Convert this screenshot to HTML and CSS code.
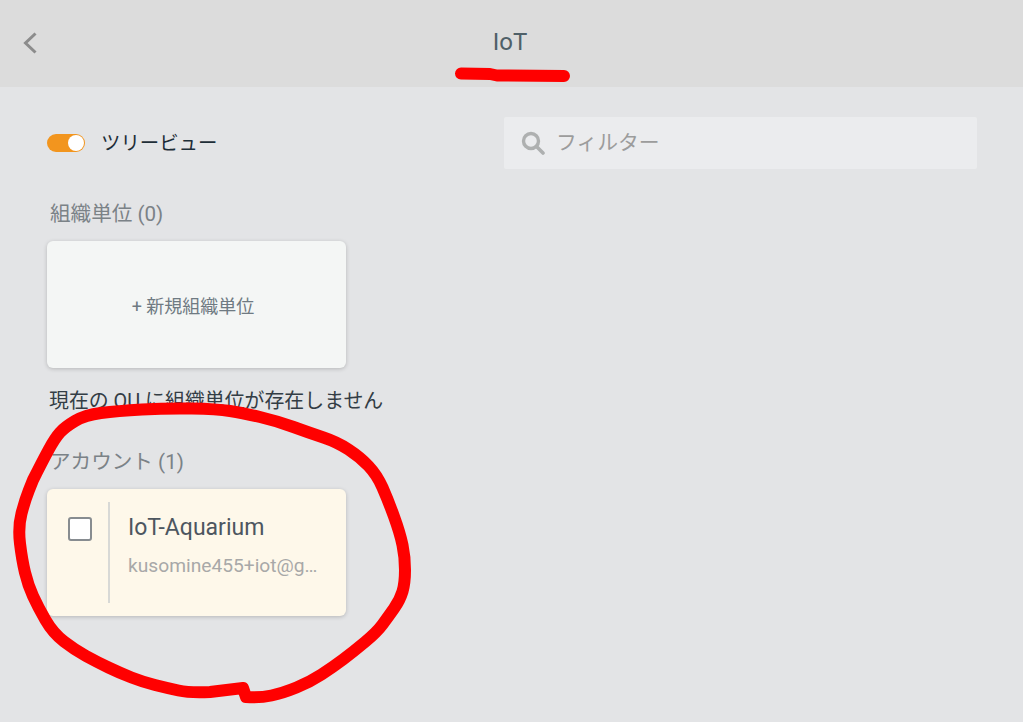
FILE: index.html
```html
<!DOCTYPE html>
<html lang="ja">
<head>
<meta charset="utf-8">
<title>IoT</title>
<link rel="stylesheet" href="styles.css">
</head>
<body>
<div class="page">
  <header class="topbar">
    <button class="back" aria-label="戻る">
      <svg width="16" height="22" viewBox="0 0 16 22"><path d="M13.5 1.5 L3.5 11 L13.5 20.5" fill="none" stroke="#8c8c8c" stroke-width="3"/></svg>
    </button>
    <h1 class="title">IoT</h1>
  </header>
  <main class="content">
    <div class="toolbar">
      <div class="tree-toggle">
        <span class="switch"><span class="knob"></span></span>
        <span class="toggle-label">ツリービュー</span>
      </div>
      <div class="filter">
        <svg class="search-icon" width="24" height="24" viewBox="0 0 24 24"><circle cx="10" cy="10" r="7.5" fill="none" stroke="#aeb0b0" stroke-width="3.4"/><path d="M15.5 15.5 L22 22" stroke="#aeb0b0" stroke-width="3.6" stroke-linecap="round"/></svg>
        <span class="placeholder">フィルター</span>
      </div>
    </div>
    <h2 class="section-label">組織単位 (0)</h2>
    <div class="card card-new">+ 新規組織単位</div>
    <p class="empty-note">現在の OU に組織単位が存在しません</p>
    <h2 class="section-label section-accounts">アカウント (1)</h2>
    <div class="card card-account">
      <div class="check-col"><span class="checkbox"></span></div>
      <div class="account-info">
        <div class="account-name">IoT-Aquarium</div>
        <div class="account-mail">kusomine455+iot@g…</div>
      </div>
    </div>
  </main>
  <svg class="scribble" width="1023" height="722" viewBox="0 0 1023 722">
    <path d="M461 73.5 L490 74 L497 75.5 L564 76" />
    <path d="M33 480 Q42 462 48.5 450 Q55 438 60 432.5 Q65 427 75 421 Q85 415 101 413 Q117 411 142 409.5 Q167 408 192 408.5 Q217 409 230 411 Q243 413 260 417 Q277 421 293.5 427 Q310 433 323.5 437.5 Q337 442 348.5 449.5 Q360 457 368.5 466 Q377 475 382.5 487.5 Q388 500 394 516.5 Q400 533 402.5 545 Q405 557 405 570 Q405 583 402.5 591.5 Q400 600 394 608.5 Q388 617 382.5 624.5 Q377 632 365 642 Q353 652 343 659.5 Q333 667 321.5 674.5 Q310 682 296.5 687.5 Q283 693 271.5 695.5 Q260 698 246 697 L243 688 L210 692 Q190 693 178.5 690.5 Q167 688 155 685 Q143 682 131.5 677.5 Q120 673 108.5 667.5 Q97 662 86 656 Q75 650 64 641.5 Q53 633 45.5 620 Q38 607 33 596 Q28 585 25 572.5 Q22 560 20 543.5 Q18 527 21.5 513.5 Q25 500 29 490 L33 480" />
  </svg>
</div>
</body>
</html>
```
FILE: styles.css
```css
html, body {
  margin: 0;
  padding: 0;
  height: 100%;
  overflow: hidden;
}
body {
  background: #e3e4e6;
  font-family: Roboto, "Noto Sans CJK JP", sans-serif;
}
.page {
  position: relative;
  height: 722px;
}
.topbar {
  height: 87px;
  background: #dcdcdc;
  display: flex;
  align-items: center;
  justify-content: center;
  position: relative;
  box-sizing: border-box;
}
.back {
  position: absolute;
  left: 22px;
  top: 32px;
  padding: 0;
  border: 0;
  background: none;
  line-height: 0;
}
.title {
  margin: 0 0 4px -3px;
  font-size: 24px;
  font-weight: 400;
  color: #4f6068;
}
.content {
  padding: 30px 46px 0 47px;
}
.toolbar {
  display: flex;
  justify-content: space-between;
  align-items: center;
}
.tree-toggle {
  display: flex;
  align-items: center;
  gap: 16px;
}
.switch {
  width: 38px;
  height: 18px;
  border-radius: 9px;
  background: #f2951e;
  position: relative;
}
.knob {
  position: absolute;
  right: 1px;
  top: 1px;
  width: 16px;
  height: 16px;
  border-radius: 50%;
  background: #fff;
}
.toggle-label {
  font-size: 19.4px;
  line-height: 26px;
  margin-top: 2px;
  color: #1e2e38;
}
.filter {
  width: 473px;
  height: 52px;
  box-sizing: border-box;
  padding-left: 17px;
  background: #ebecee;
  border-radius: 2px;
  display: flex;
  align-items: center;
  gap: 11px;
}
.placeholder {
  font-size: 20.8px;
  line-height: 28px;
  color: #9c9c9c;
}
.section-label {
  margin: 31px 0 13px 3px;
  font-size: 20.6px;
  line-height: 28px;
  font-weight: 400;
  color: #7b8287;
}
.card {
  width: 299px;
  height: 127px;
  box-sizing: border-box;
  border-radius: 6px;
  box-shadow: 0 1px 4px rgba(0, 0, 0, 0.2);
}
.card-new {
  background: #f4f6f5;
  display: flex;
  align-items: center;
  justify-content: center;
  padding-right: 7px;
  font-size: 18px;
  color: #6f7a82;
}
.empty-note {
  margin: 20px 0 0 2px;
  font-size: 19.9px;
  line-height: 28px;
  color: #333d45;
}
.section-accounts {
  margin-top: 32px;
  margin-bottom: 13px;
}
.card-account {
  background: #fef8ea;
  display: flex;
  padding: 13px 0;
}
.check-col {
  width: 40px;
  height: 86px;
  flex: none;
  border-right: 2px solid #d8d9d6;
  padding: 15px 0 0 21px;
}
.checkbox {
  display: block;
  width: 24px;
  height: 24px;
  box-sizing: border-box;
  border: 2px solid #878c90;
  border-radius: 3px;
  background: #fff;
}
.account-info {
  min-width: 0;
  flex: 1;
  padding: 0 0 0 18px;
}
.account-name {
  font-size: 23px;
  line-height: 30px;
  margin-top: 11px;
  color: #4d5660;
}
.account-mail {
  margin-top: 10px;
  font-size: 19.2px;
  line-height: 26px;
  color: #a8a8a8;
  white-space: nowrap;
}
.scribble {
  position: absolute;
  left: 0;
  top: 0;
  fill: none;
  stroke: #ff0000;
  stroke-width: 12;
  stroke-linecap: round;
  stroke-linejoin: round;
  pointer-events: none;
}
```
